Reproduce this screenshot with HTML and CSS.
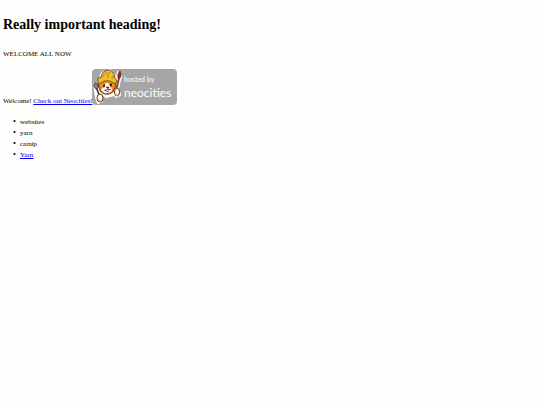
FILE: index.html
```html
<!DOCTYPE html>
<html lang="en">
<head>
<meta charset="utf-8">
<title>Really important heading!</title>
<link rel="stylesheet" href="styles.css">
</head>
<body>
<h1>Really important heading!</h1>
<p>WELCOME ALL NOW</p>
<div class="intro">Welcome! <a href="#neocities">Check out Neocities!</a><svg class="badge" viewBox="0 0 85 36" role="img" aria-label="hosted by neocities">
  <rect x="0" y="0" width="85" height="36" rx="4" fill="#a6a6a6"/>
  <g stroke="#fff" stroke-width="2" stroke-linejoin="round" fill="#fff">
    <path d="M7 10 10 4 18 1 24 8 25 17 22 26 14 28 7 23 6 16Z"/>
    <path d="M2 15 5 15 9 26 10 32 6 34 4 29Z M26 3 29 7 26 19 28 26 24 28 22 25Z"/>
  </g>
  <path d="M6 14 8 22Q14 28 21 23L24 16 23 10 15 8Z" fill="#f08a2c" stroke="#5b3318" stroke-width="1"/>
  <path d="M14 14Q13 18 9 20Q11 25 16 24Q20 23 20 20Q17 17 16 14Z" fill="#fff"/>
  <path d="M6 15 6 9 9 8Q10 2 16 1Q22 1 23 9L25 12 23 15Q16 9 9 14Z" fill="#f0bd2c" stroke="#765315" stroke-width="1" stroke-linejoin="round"/>
  <path d="M10 8Q13 4 15 3M16 9Q15 5 18 3M20 10Q20 7 22 7" fill="none" stroke="#b57c14" stroke-width="1"/>
  <ellipse cx="12" cy="17" rx="1" ry="1.4" fill="#251b18"/>
  <ellipse cx="19" cy="16" rx="1" ry="1.4" fill="#251b18"/>
  <path d="M14 18H17L16 20ZM12 21Q14 23 16 20Q18 22 19 20" fill="#4a2118" stroke="#4a2118" stroke-width=".5"/>
  <path d="M14 22Q16 22 17 21L16 24Z" fill="#d34b42"/>
  <path d="M4 18 8 28" stroke="#333" stroke-width="1.6"/>
  <ellipse cx="4" cy="17" rx="2" ry="3" transform="rotate(-25 4 17)" fill="#888" stroke="#333" stroke-width=".8"/>
  <path d="M27 9 24 22" stroke="#8d4b25" stroke-width="2"/>
  <path d="M26 9Q25 5 28 2Q30 6 28 9Z" fill="#b51f35" stroke="#592027" stroke-width=".8"/>
  <ellipse cx="8" cy="29" rx="3" ry="4" fill="#fff" stroke="#5b3318" stroke-width="1"/>
  <ellipse cx="25" cy="23" rx="2.5" ry="4" fill="#fff" stroke="#5b3318" stroke-width="1"/>
  <path d="M6 30 7 32Q9 33 10 31M23 24 25 27 27 24" fill="none" stroke="#ef8a38" stroke-width="1"/>
  <text class="hosted" x="32" y="13">hosted by</text>
  <text class="brand" x="32" y="28">neocities</text>
</svg></div>
<ul>
  <li>websites</li>
  <li>yarn</li>
  <li>catnip</li>
  <li><a href="#yarn">Yarn</a></li>
</ul>
</body>
</html>
```
FILE: styles.css
```css
body {
  margin: 15px 3px;
  font-family: "Liberation Serif", serif;
  font-size: 7px;
  line-height: 11px;
  color: #000;
  background: #fefefe;
}

h1 {
  margin: 0 0 14px;
  font-size: 14px;
  line-height: 20px;
}

p {
  margin: 0 0 9px;
}

a {
  color: #0000ee;
}

.badge {
  width: 85px;
  height: 36px;
  vertical-align: -2px;
}

.hosted,
.brand {
  font-family: "Lato", sans-serif;
  fill: #fff;
}

.hosted {
  font-size: 7px;
}

.brand {
  font-size: 12px;
}

ul {
  margin: 10px 0 0;
  padding-left: 17px;
  list-style: none;
}

li::before {
  content: "•";
  display: inline-block;
  width: 7px;
  margin-left: -7px;
  font-size: 8px;
  line-height: 8px;
}
```
